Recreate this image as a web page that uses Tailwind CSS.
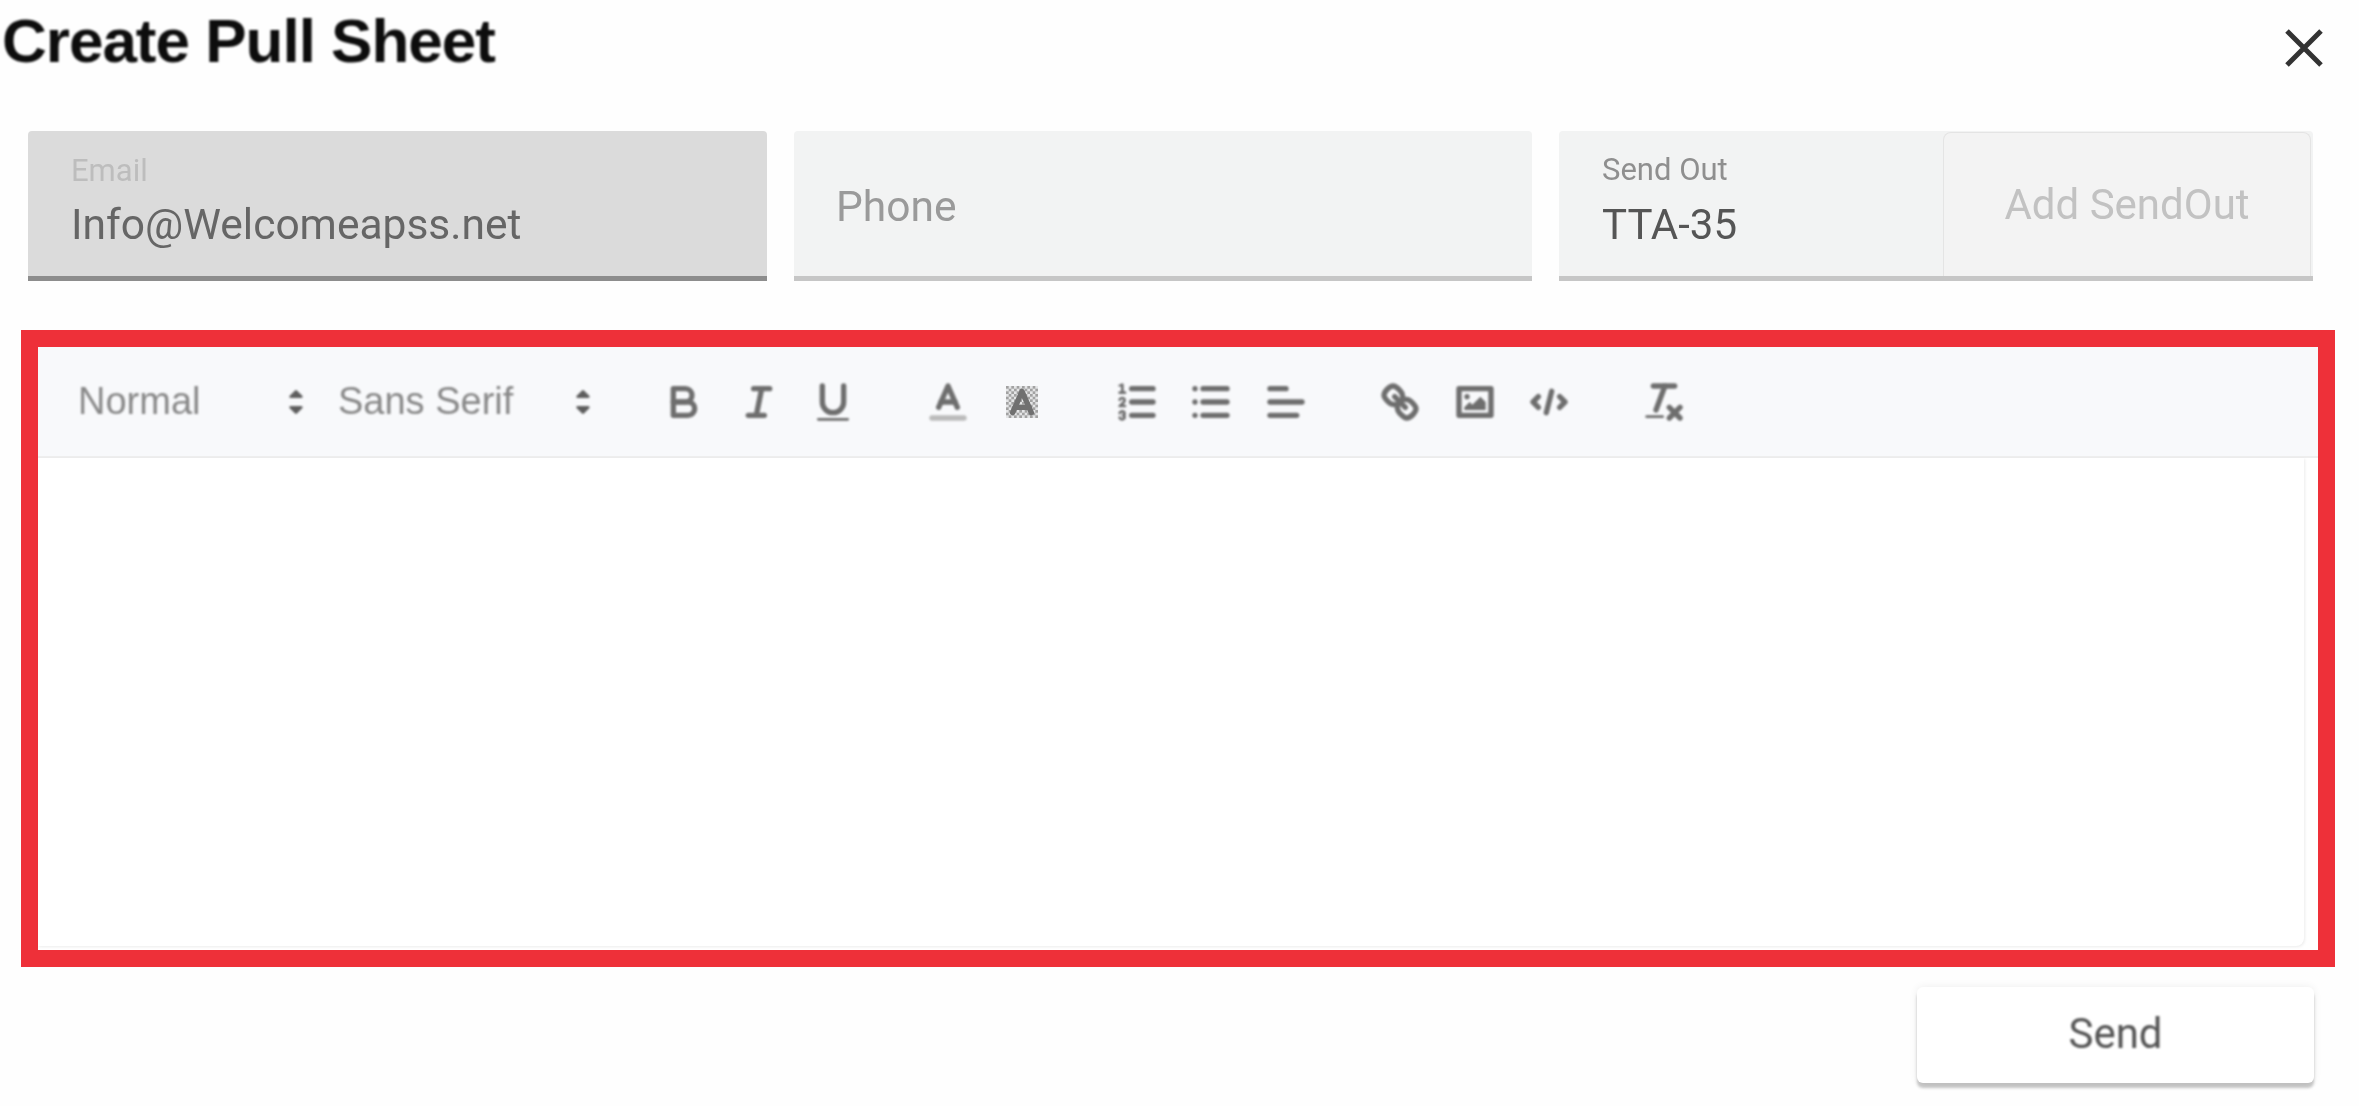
<!DOCTYPE html>
<html>
<head>
<meta charset="utf-8">
<title>Create Pull Sheet</title>
<script src="https://cdn.jsdelivr.net/npm/@tailwindcss/browser@4"></script>
</head>
<body class="bg-[#fefefe]">
<div class="w-[2359px] h-[1106px] overflow-hidden flex flex-col font-['Roboto',sans-serif]">
  <header class="h-[131px] flex items-start justify-between pl-[2px] pr-[36px] shrink-0">
    <h1 class="mt-[5px] text-[62px] leading-[72px] font-bold text-[#0d0d0d] font-['Liberation_Sans',sans-serif] tracking-[-1px] blur-[1.2px]">Create Pull Sheet</h1>
    <svg class="mt-[29px] w-[38px] h-[38px] blur-[0.7px]" viewBox="0 0 38 38" fill="none" stroke="#333333" stroke-width="5"><path d="M2 2 36 36M36 2 2 36"/></svg>
  </header>

  <div class="flex gap-[27px] pl-[28px] pr-[45px] h-[150px] shrink-0">
    <div class="w-[739px] bg-[#dbdbdb] border-b-[5px] border-[#8d8d8d] rounded-t-[4px] pl-[43px] pt-[24px] blur-[0.7px]">
      <div class="text-[31px] leading-[32px] text-[#bdbdbd]">Email</div>
      <div class="mt-[13px] text-[42.5px] leading-[50px] text-[#666]">Info@Welcomeapss.net</div>
    </div>
    <div class="w-[738px] bg-[#f2f3f3] border-b-[5px] border-[#c6c6c6] rounded-t-[4px] pl-[42px] pt-[51px] blur-[0.7px]">
      <div class="text-[42.5px] leading-[50px] text-[#9a9a9a]">Phone</div>
    </div>
    <div class="w-[754px] relative flex bg-[#f2f3f3] border-b-[5px] border-[#c6c6c6] rounded-t-[4px] pl-[43px] pt-[23px] blur-[0.7px]">
      <div>
        <div class="text-[31px] leading-[32px] text-[#8f8f8f]">Send Out</div>
        <div class="mt-[14px] text-[42px] leading-[50px] text-[#555]">TTA-35</div>
      </div>
      <div class="absolute right-[2px] top-[1px] bottom-0 w-[368px] border border-b-0 border-[#e4e4e4] rounded-t-[8px] bg-[#f3f3f3] flex justify-center pt-[47px] text-[42px] leading-[50px] text-[#c2c2c2]">Add SendOut</div>
    </div>
  </div>

  <section class="mt-[49px] mx-[21px] w-[2314px] h-[637px] border-[17px] border-[#ee3039] bg-white shrink-0 flex flex-col">
    <div class="h-[111px] bg-[#f8f9fb] border-b-[2px] border-[#eeeeee] flex items-center pl-[19px] text-[#5e5e5e] font-['Liberation_Sans',sans-serif] text-[38px] shrink-0">
      <div class="w-[260px] flex items-center justify-between pl-[21px] text-[#888] blur-[1.3px]">
        <span>Normal</span>
        <svg class="w-[48px] h-[48px] -mr-[3px]" viewBox="0 0 18 18" fill="#5e5e5e" stroke="#5e5e5e" stroke-linejoin="round"><polygon points="7 11 9 13 11 11 7 11"/><polygon points="7 7 9 5 11 7 7 7"/></svg>
      </div>
      <div class="w-[286px] flex items-center justify-between pl-[21px] text-[#888] blur-[1.3px]">
        <span>Sans Serif</span>
        <svg class="w-[48px] h-[48px] -mr-[4px]" viewBox="0 0 18 18" fill="#5e5e5e" stroke="#5e5e5e" stroke-linejoin="round"><polygon points="7 11 9 13 11 11 7 11"/><polygon points="7 7 9 5 11 7 7 7"/></svg>
      </div>

      <div class="ml-[44px] flex items-center blur-[1px]">
        <div class="w-[74.5px] flex justify-center"><svg class="w-[48px] h-[48px]" viewBox="0 0 18 18" fill="none" stroke="#6e6e6e" stroke-width="2" stroke-linecap="round" stroke-linejoin="round"><path d="M5,4H9.5A2.5,2.5,0,0,1,12,6.5v0A2.5,2.5,0,0,1,9.5,9H5V4Z"/><path d="M5,9h5.5A2.5,2.5,0,0,1,13,11.5v0A2.5,2.5,0,0,1,10.5,14H5V9Z"/></svg></div>
        <div class="w-[74.5px] flex justify-center"><svg class="w-[48px] h-[48px]" viewBox="0 0 18 18" fill="none" stroke="#6e6e6e" stroke-width="2" stroke-linecap="round"><line x1="7" x2="13" y1="4" y2="4"/><line x1="5" x2="11" y1="14" y2="14"/><line x1="8" x2="10" y1="14" y2="4"/></svg></div>
        <div class="w-[74.5px] flex justify-center"><svg class="w-[48px] h-[48px]" viewBox="0 0 18 18" fill="none" stroke="#6e6e6e" stroke-width="2" stroke-linecap="round"><path d="M5,3V9a4.012,4.012,0,0,0,4,4H9a4.012,4.012,0,0,0,4-4V3"/><rect fill="#6e6e6e" stroke="none" height="1" rx="0.5" ry="0.5" width="12" x="3" y="15"/></svg></div>
      </div>

      <div class="ml-[40px] flex items-center">
        <div class="w-[74.5px] flex justify-center blur-[1px]"><svg class="w-[48px] h-[48px]" viewBox="0 0 18 18" fill="none" stroke="#6e6e6e" stroke-width="2" stroke-linecap="round" stroke-linejoin="round"><line stroke="#bbbbbb" x1="3" x2="15" y1="15" y2="15"/><polyline points="5.5 11 9 3 12.5 11"/><line x1="11.63" x2="6.38" y1="9" y2="9"/></svg></div>
        <div class="w-[74.5px] flex justify-center blur-[0.5px]"><svg class="w-[48px] h-[48px]" viewBox="0 0 18 18" fill="none" stroke="#707070" stroke-width="2" stroke-linecap="round" stroke-linejoin="round"><defs><pattern id="bgdots" width="2" height="2" patternUnits="userSpaceOnUse" patternTransform="translate(1 1)"><rect width="1" height="1" fill="#a2a2a2" stroke="none"/><rect x="1" y="1" width="1" height="1" fill="#a2a2a2" stroke="none"/></pattern></defs><rect x="3" y="3" width="12" height="12" fill="#e4e5e6" stroke="none"/><rect x="3" y="3" width="12" height="12" fill="url(#bgdots)" stroke="none"/><polyline points="5.5 13 9 5 12.5 13"/><line x1="11.63" x2="6.38" y1="11" y2="11"/></svg></div>
      </div>

      <div class="ml-[40px] flex items-center blur-[1px]">
        <div class="w-[74.5px] flex justify-center"><svg class="w-[48px] h-[48px]" viewBox="0 0 18 18" fill="none" stroke="#6e6e6e" stroke-width="2" stroke-linecap="round" stroke-linejoin="round"><line x1="7" x2="15" y1="4" y2="4"/><line x1="7" x2="15" y1="9" y2="9"/><line x1="7" x2="15" y1="14" y2="14"/><line stroke-width="1" x1="2.5" x2="4.5" y1="5.5" y2="5.5"/><path fill="#6e6e6e" stroke="none" d="M3.5,6A0.5,0.5,0,0,1,3,5.5V3.085l-0.276.138A0.5,0.5,0,0,1,2.053,3c-0.124-.247-0.023-0.324.224-0.447l1-.5A0.5,0.5,0,0,1,4,2.5v3A0.5,0.5,0,0,1,3.5,6Z"/><path stroke-width="1" d="M4.5,10.5h-2c0-.234,1.85-1.076,1.85-2.234A0.959,0.959,0,0,0,2.5,8.156"/><path stroke-width="1" d="M2.5,14.846a0.959,0.959,0,0,0,1.85-.109A0.7,0.7,0,0,0,3.75,14a0.688,0.688,0,0,0,.6-0.736,0.959,0.959,0,0,0-1.85-.109"/></svg></div>
        <div class="w-[74.5px] flex justify-center"><svg class="w-[48px] h-[48px]" viewBox="0 0 18 18" fill="none" stroke="#6e6e6e" stroke-width="2" stroke-linecap="round"><line x1="6" x2="15" y1="4" y2="4"/><line x1="6" x2="15" y1="9" y2="9"/><line x1="6" x2="15" y1="14" y2="14"/><line x1="3" x2="3" y1="4" y2="4"/><line x1="3" x2="3" y1="9" y2="9"/><line x1="3" x2="3" y1="14" y2="14"/></svg></div>
        <div class="w-[74.5px] flex justify-center"><svg class="w-[48px] h-[48px]" viewBox="0 0 18 18" fill="none" stroke="#6e6e6e" stroke-width="2" stroke-linecap="round"><line x1="3" x2="15" y1="9" y2="9"/><line x1="3" x2="13" y1="14" y2="14"/><line x1="3" x2="9" y1="4" y2="4"/></svg></div>
      </div>

      <div class="ml-[40px] flex items-center blur-[1px]">
        <div class="w-[74.5px] flex justify-center"><svg class="w-[48px] h-[48px]" viewBox="0 0 18 18" fill="none" stroke="#6e6e6e" stroke-width="2" stroke-linecap="round" stroke-linejoin="round"><line x1="7" x2="11" y1="7" y2="11"/><path d="M8.9,4.577a3.476,3.476,0,0,1,.36,4.679A3.476,3.476,0,0,1,4.577,8.9C3.185,7.5,2.035,6.4,4.217,4.217S7.5,3.185,8.9,4.577Z"/><path d="M13.423,9.1a3.476,3.476,0,0,0-4.679-.36,3.476,3.476,0,0,0,.36,4.679c1.392,1.392,2.5,2.542,4.679.36S14.815,10.5,13.423,9.1Z"/></svg></div>
        <div class="w-[74.5px] flex justify-center"><svg class="w-[48px] h-[48px]" viewBox="0 0 18 18" fill="none" stroke="#6e6e6e" stroke-width="2" stroke-linecap="round" stroke-linejoin="round"><rect height="10" width="12" x="3" y="4"/><circle fill="#6e6e6e" stroke="none" cx="6" cy="7" r="1"/><polyline fill="#6e6e6e" stroke="none" points="5 12 5 11 7 9 8 10 11 7 13 9 13 12 5 12"/></svg></div>
        <div class="w-[74.5px] flex justify-center"><svg class="w-[48px] h-[48px]" viewBox="0 0 18 18" fill="none" stroke="#6e6e6e" stroke-width="2" stroke-linecap="round" stroke-linejoin="round"><polyline points="5 7 3 9 5 11"/><polyline points="13 7 15 9 13 11"/><line x1="10" x2="8" y1="5" y2="13"/></svg></div>
      </div>

      <div class="ml-[40px] flex items-center blur-[1px]">
        <div class="w-[74.5px] flex justify-center"><svg class="w-[48px] h-[48px]" viewBox="0 0 18 18" fill="none" stroke="#6e6e6e" stroke-width="2" stroke-linecap="round"><line x1="5" x2="13" y1="3" y2="3"/><line x1="6" x2="9.35" y1="12" y2="3"/><line x1="11" x2="15" y1="11" y2="15"/><line x1="15" x2="11" y1="11" y2="15"/><rect fill="#6e6e6e" stroke="none" height="1" rx="0.5" ry="0.5" width="7" x="2" y="14"/></svg></div>
      </div>
    </div>
    <div class="grow mr-[14px] mb-[4px] rounded-br-[8px] bg-white shadow-[1px_1px_3px_rgba(0,0,0,0.08)]"></div>
  </section>

  <div class="flex justify-end pr-[45px] pt-[20px]">
    <button class="w-[397px] h-[96px] bg-white rounded-[6px] text-[42px] leading-[50px] pb-[3px] text-[#555] shadow-[0_5px_3px_rgba(0,0,0,0.22),0_0_8px_rgba(0,0,0,0.07)]"><span class="blur-[1px] inline-block">Send</span></button>
  </div>
</div>
</body>
</html>
